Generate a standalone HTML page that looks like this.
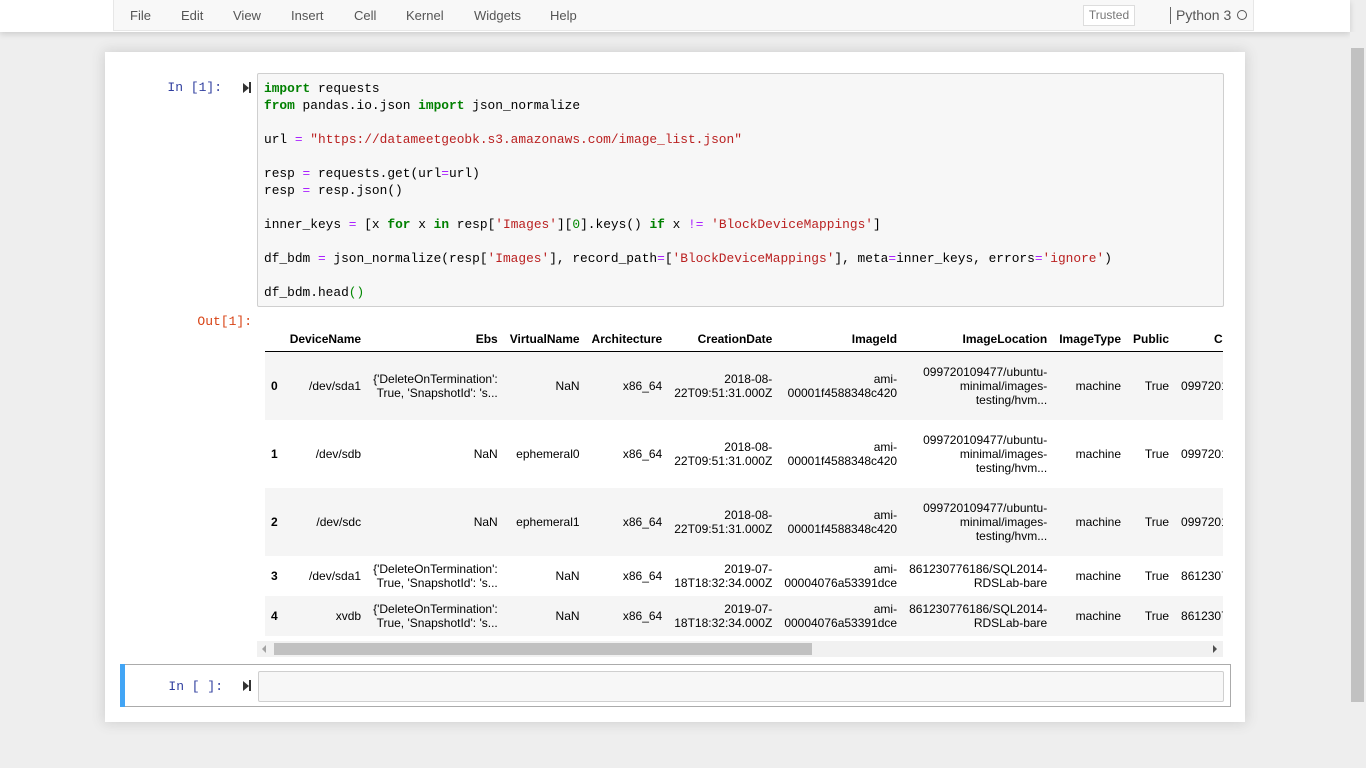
<!DOCTYPE html>
<html><head><meta charset="utf-8"><style>
body{margin:0;width:1366px;height:768px;background:#eee;overflow:hidden;position:relative;font-family:"Liberation Sans",Arial,sans-serif;}
#top{position:absolute;left:0;top:0;width:1350px;height:32px;background:#fff;box-shadow:0 2px 6px rgba(0,0,0,.15);}
#menu{position:absolute;left:113px;top:0;width:1139px;height:30px;background:#f8f8f8;border:1px solid #e7e7e7;border-top:none;}
#menu span{position:absolute;top:8px;font-size:13px;color:#555;}
#trusted{position:absolute;left:969px;top:5px;width:50px;height:19px;border:1px solid #ddd;background:#fff;font-size:12px;color:#777;text-align:center;line-height:19px}
#nb{position:absolute;left:105px;top:52px;width:1140px;height:670px;background:#fff;box-shadow:0 0 12px 1px rgba(87,87,87,.2);}
.prompt{position:absolute;font-family:"Liberation Mono",monospace;font-size:13px;text-align:right;}
pre{margin:0;font-family:"Liberation Mono",monospace;font-size:12.85px;line-height:17px;color:#000}
.k{color:#008000;font-weight:bold}.s{color:#ba2121}.o{color:#aa22ff}.n{color:#080}
#inp{position:absolute;left:257px;top:73px;width:965px;height:232px;background:#f7f7f7;border:1px solid #cfcfcf;border-radius:2px;}
#inp pre{position:absolute;left:6px;top:6px}
#out{position:absolute;left:257px;top:320px;width:966px;height:318px;overflow:hidden}
table{position:absolute;left:6px;top:8px;border-collapse:collapse;table-layout:fixed;font-size:12px;color:#000}
td,th{padding:0 6px;text-align:right;white-space:nowrap;line-height:14px;overflow:hidden}
thead th{font-weight:bold;height:21px;padding-bottom:2px;border-bottom:1px solid #000;}
tbody th{border:none}
tr.g{background:#f5f5f5}
#sb{position:absolute;left:257px;top:641px;width:966px;height:16px;background:#f1f1f1}
#thumb{position:absolute;left:17px;top:2px;width:538px;height:12px;background:#c1c1c1}
#cell2{position:absolute;left:120px;top:664px;width:1109px;height:41px;border:1px solid #ababab;}
#bar{position:absolute;left:-1px;top:-1px;width:5px;height:43px;background:#42a5f5}
#inp2{position:absolute;left:137px;top:6px;width:964px;height:29px;background:#f7f7f7;border:1px solid #cfcfcf;border-radius:2px}
.run{position:absolute;width:0;height:0;border-top:5px solid transparent;border-bottom:5px solid transparent;border-left:6px solid #333}
.runb{position:absolute;width:2px;height:11px;background:#333}
#vs{position:absolute;left:1350px;top:32px;width:16px;height:736px;background:#eee}
</style></head><body>
<div id="top"><div id="menu">
<span style="left:16px">File</span><span style="left:67px">Edit</span><span style="left:119px">View</span><span style="left:177px">Insert</span><span style="left:240px">Cell</span><span style="left:292px">Kernel</span><span style="left:360px">Widgets</span><span style="left:436px">Help</span>
<div id="trusted">Trusted</div>
<div style="position:absolute;left:1056px;top:7px;width:1px;height:17px;background:#666"></div>
<span style="left:1062px;color:#555;font-size:14px;top:7px">Python 3</span>
<div style="position:absolute;left:1123px;top:10px;width:8px;height:8px;border:1.5px solid #555;border-radius:50%"></div>
</div></div>
<div id="vs"><div style="position:absolute;left:1px;top:16px;width:13px;height:654px;background:#c1c1c1"></div></div>
<div id="nb"></div>
<div class="prompt" style="left:150px;top:80px;width:72px;color:#303f9f">In [1]:</div>
<div class="run" style="left:243px;top:83px"></div><div class="runb" style="left:249px;top:82px"></div>
<div id="inp"><pre><span class="k">import</span> requests
<span class="k">from</span> pandas.io.json <span class="k">import</span> json_normalize

url <span class="o">=</span> <span class="s">"https://datameetgeobk.s3.amazonaws.com/image_list.json"</span>

resp <span class="o">=</span> requests.get(url<span class="o">=</span>url)
resp <span class="o">=</span> resp.json()

inner_keys <span class="o">=</span> [x <span class="k">for</span> x <span class="k">in</span> resp[<span class="s">'Images'</span>][<span class="n">0</span>].keys() <span class="k">if</span> x <span class="o">!=</span> <span class="s">'BlockDeviceMappings'</span>]

df_bdm <span class="o">=</span> json_normalize(resp[<span class="s">'Images'</span>], record_path<span class="o">=</span>[<span class="s">'BlockDeviceMappings'</span>], meta<span class="o">=</span>inner_keys, errors<span class="o">=</span><span class="s">'ignore'</span>)

df_bdm.head<span class="n">()</span></pre></div>
<div class="prompt" style="left:150px;top:314px;width:102px;color:#d84315">Out[1]:</div>
<div id="out"><table style="left:8px">
<colgroup><col style="width:20px"><col style="width:83px"><col style="width:137px"><col style="width:82px"><col style="width:83px"><col style="width:111px"><col style="width:125px"><col style="width:151px"><col style="width:74px"><col style="width:49px"><col style="width:140px"></colgroup>
<thead><tr><th></th><th>DeviceName</th><th>Ebs</th><th>VirtualName</th><th>Architecture</th><th>CreationDate</th><th>ImageId</th><th>ImageLocation</th><th>ImageType</th><th>Public</th><th style="text-align:left;padding-left:39px">CreationDate</th></tr></thead>
<tbody>
<tr class="g" style="height:68px"><th style="text-align:left">0</th><td>/dev/sda1</td><td>{'DeleteOnTermination':<br>True, 'SnapshotId': 's...</td><td>NaN</td><td>x86_64</td><td>2018-08-<br>22T09:51:31.000Z</td><td>ami-<br>00001f4588348c420</td><td>099720109477/ubuntu-<br>minimal/images-<br>testing/hvm...</td><td>machine</td><td>True</td><td style="text-align:left">099720109477</td></tr>
<tr style="height:68px"><th style="text-align:left">1</th><td>/dev/sdb</td><td>NaN</td><td>ephemeral0</td><td>x86_64</td><td>2018-08-<br>22T09:51:31.000Z</td><td>ami-<br>00001f4588348c420</td><td>099720109477/ubuntu-<br>minimal/images-<br>testing/hvm...</td><td>machine</td><td>True</td><td style="text-align:left">099720109477</td></tr>
<tr class="g" style="height:68px"><th style="text-align:left">2</th><td>/dev/sdc</td><td>NaN</td><td>ephemeral1</td><td>x86_64</td><td>2018-08-<br>22T09:51:31.000Z</td><td>ami-<br>00001f4588348c420</td><td>099720109477/ubuntu-<br>minimal/images-<br>testing/hvm...</td><td>machine</td><td>True</td><td style="text-align:left">099720109477</td></tr>
<tr style="height:40px"><th style="text-align:left">3</th><td>/dev/sda1</td><td>{'DeleteOnTermination':<br>True, 'SnapshotId': 's...</td><td>NaN</td><td>x86_64</td><td>2019-07-<br>18T18:32:34.000Z</td><td>ami-<br>00004076a53391dce</td><td>861230776186/SQL2014-<br>RDSLab-bare</td><td>machine</td><td>True</td><td style="text-align:left">861230776186</td></tr>
<tr class="g" style="height:40px"><th style="text-align:left">4</th><td>xvdb</td><td>{'DeleteOnTermination':<br>True, 'SnapshotId': 's...</td><td>NaN</td><td>x86_64</td><td>2019-07-<br>18T18:32:34.000Z</td><td>ami-<br>00004076a53391dce</td><td>861230776186/SQL2014-<br>RDSLab-bare</td><td>machine</td><td>True</td><td style="text-align:left">861230776186</td></tr>
</tbody></table></div>
<div id="sb"><div style="position:absolute;left:5px;top:4px;border-top:4px solid transparent;border-bottom:4px solid transparent;border-right:4px solid #a3a3a3"></div><div id="thumb"></div><div style="position:absolute;right:6px;top:4px;border-top:4px solid transparent;border-bottom:4px solid transparent;border-left:4px solid #505050"></div></div>
<div id="cell2"><div id="bar"></div><div id="inp2"></div>
<div class="prompt" style="left:30px;top:14px;width:72px;color:#303f9f">In [ ]:</div>
<div class="run" style="left:122px;top:16px"></div><div class="runb" style="left:128px;top:15px"></div>
</div>
</body></html>
